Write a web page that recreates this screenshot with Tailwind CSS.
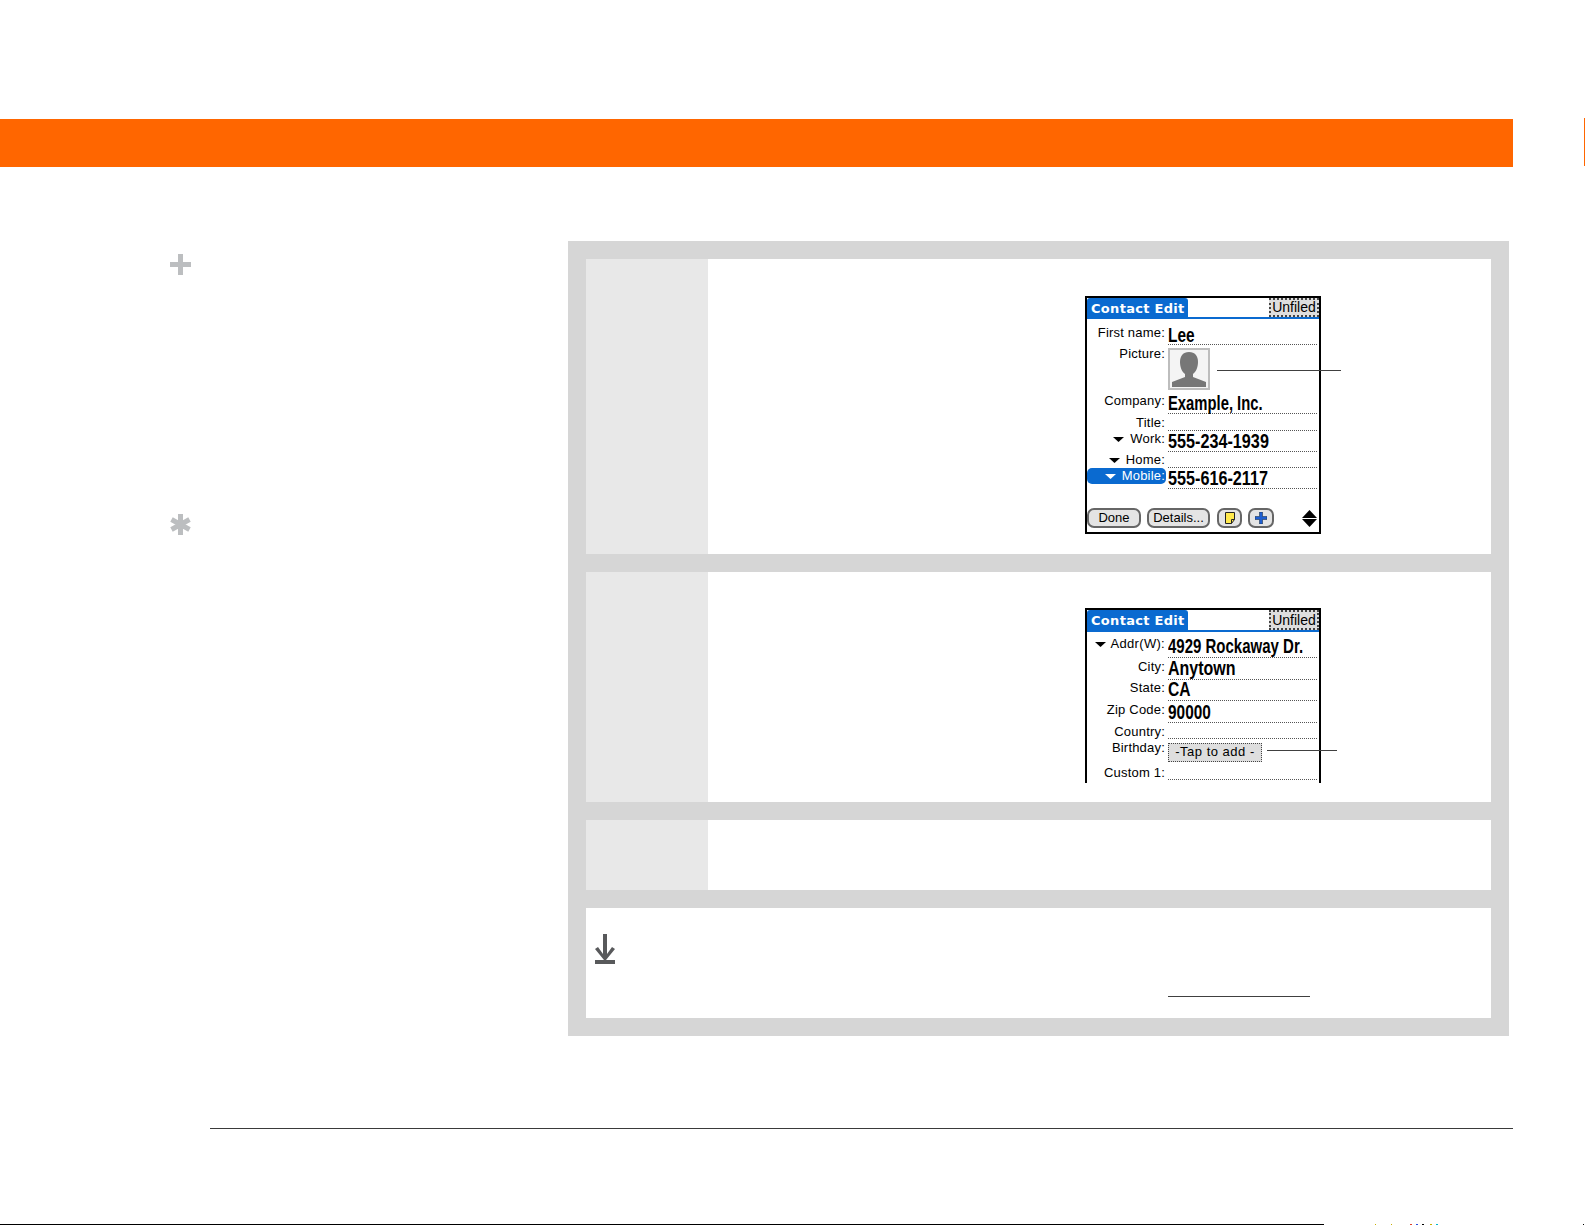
<!DOCTYPE html>
<html lang="en">
<head>
    <meta charset="UTF-8">
    <title>Contact Edit</title>
    <script src="https://cdn.jsdelivr.net/npm/@tailwindcss/browser@4"></script>
</head>
<body class="bg-white font-['Liberation_Sans',sans-serif] text-black">
<div class="relative w-[1585px] h-[1225px] overflow-hidden pt-[119px]">
    <!-- Orange header -->
    <div class="w-[1513px] h-[48px] bg-[#ff6600]"></div>
    <div class="absolute right-0 top-[118px] w-px h-[48px] bg-[#ff6600]"></div>

    <div class="flex mt-[74px]">
        <!-- Sidebar icons -->
        <div class="w-[568px] pl-[170px] flex flex-col">
            <svg class="mt-[13px]" width="21" height="21" viewBox="0 0 21 21"><path d="M8 0h5v8h8v5h-8v8H8v-8H0V8h8z" fill="#bcbec0"/></svg>
            <svg class="mt-[239px]" width="21" height="21" viewBox="0 0 21 21"><path d="M10.500 0v21M1.500 5.500l18 10M1.500 15.500l18-10" fill="none" stroke="#bcbec0" stroke-width="5"/></svg>
        </div>

        <!-- Step table -->
        <div class="w-[941px] h-[795px] bg-[#d6d6d6] p-[18px] flex flex-col gap-[18px]">
            <!-- Step 1 -->
            <div class="h-[295px] bg-white flex">
                <div class="w-[122px] bg-[#e8e8e8]"></div>
                <div class="pl-[377px] pt-[37px]">
                    <div class="relative w-[236px] h-[238px] border-2 border-black bg-white">
                        <div class="flex justify-between h-[21px] border-b-2 border-[#0a6ad0]">
                            <div class="w-[101px] bg-[#0a6ad0] rounded-t-[3px] pl-[4px] text-white font-['DejaVu_Sans',sans-serif] font-bold text-[13px] tracking-[0.3px] leading-[21px]">Contact Edit</div>
                            <div class="w-[50px] border-2 border-dotted border-[#444] bg-[#dedede] text-[14px] leading-[15px] text-center">Unfiled</div>
                        </div>
                        <div class="flex items-end h-[26px]"><div class="w-[79px] pr-px pb-[5px] text-right text-[13px] tracking-[0.2px] leading-[14px]">First name:</div><div class="ml-[2px] w-[149px] h-full border-b border-dotted border-[#555] font-bold text-[20px] leading-[32px]"><span class="inline-block origin-left scale-x-[.77] whitespace-nowrap">Lee</span></div></div>
                        <div class="flex h-[46px]"><div class="w-[79px] pr-px pt-[2px] text-right text-[13px] tracking-[0.2px] leading-[14px]">Picture:</div>
                            <div class="ml-[2px] mt-[3px] w-[42px] h-[42px] border-2 border-[#bdbdbd] bg-[#f4f4f4] p-px">
                                <svg width="36" height="36" viewBox="0 0 36 36"><path d="M18 1c6 0 9 4 9 10 0 5-2 10-5 12v3l13 5v5H1v-5l13-5v-3c-3-2-5-7-5-12C9 5 12 1 18 1z" fill="#777"/></svg>
                            </div>
                        </div>
                        <div class="flex items-end h-[23px]"><div class="w-[79px] pr-px pb-[6px] text-right text-[13px] tracking-[0.2px] leading-[14px]">Company:</div><div class="ml-[2px] w-[149px] h-full border-b border-dotted border-[#555] font-bold text-[20px] leading-[25px]"><span class="inline-block origin-left scale-x-[.74] whitespace-nowrap">Example, Inc.</span></div></div>
                        <div class="flex items-end h-[17px]"><div class="w-[79px] pr-px pb-[1px] text-right text-[13px] tracking-[0.2px] leading-[14px]">Title:</div><div class="ml-[2px] w-[149px] h-full border-b border-dotted border-[#555]"></div></div>
                        <div class="flex items-end h-[21px]"><div class="w-[79px] pr-px pb-[6px] flex justify-end items-center gap-[6px] text-[13px] tracking-[0.2px] leading-[14px]"><svg width="11" height="5" viewBox="0 0 11 5"><path d="M0 0h11L5.500 5z"/></svg><span>Work:</span></div><div class="ml-[2px] w-[149px] h-full border-b border-dotted border-[#555] font-bold text-[20px] leading-[21px]"><span class="inline-block origin-left scale-x-[.81] whitespace-nowrap">555-234-1939</span></div></div>
                        <div class="flex items-end h-[16px]"><div class="w-[79px] pr-px pb-[1px] flex justify-end items-center gap-[6px] text-[13px] tracking-[0.2px] leading-[14px]"><svg width="11" height="5" viewBox="0 0 11 5"><path d="M0 0h11L5.500 5z"/></svg><span>Home:</span></div><div class="ml-[2px] w-[149px] h-full border-b border-dotted border-[#555]"></div></div>
                        <div class="flex items-end h-[21px]"><div class="w-[79px] h-[16px] mb-[5px] pr-px rounded-[5px] bg-[#0a6ad0] text-white flex justify-end items-center gap-[6px] text-[13px] tracking-[0.2px] leading-[14px]"><svg width="11" height="5" viewBox="0 0 11 5"><path d="M0 0h11L5.500 5z" fill="#fff"/></svg><span>Mobile:</span></div><div class="ml-[2px] w-[149px] h-full border-b border-dotted border-[#555] font-bold text-[20px] leading-[21px]"><span class="inline-block origin-left scale-x-[.81] whitespace-nowrap">555-616-2117</span></div></div>
                        <!-- Command bar -->
                        <div class="flex items-center mt-[19px] h-[20px]">
                            <div class="w-[54px] h-[20px] rounded-[7px] border-2 border-[#666] bg-[#e4e4e4] text-[13px] leading-[16px] text-center">Done</div>
                            <div class="ml-[6px] w-[63px] h-[20px] rounded-[7px] border-2 border-[#666] bg-[#e4e4e4] text-[13px] leading-[16px] text-center">Details...</div>
                            <div class="ml-[7px] w-[25px] h-[20px] rounded-[7px] border-2 border-[#666] bg-[#e4e4e4] flex items-center justify-center"><svg width="10" height="12" viewBox="0 0 10 12"><path d="M.5.500h9v7l-3 4h-6z" fill="#ffe94d" stroke="#222"/><path d="M6.500 11.500v-4h3" fill="none" stroke="#222"/></svg></div>
                            <div class="ml-[6px] w-[26px] h-[20px] rounded-[7px] border-2 border-[#666] bg-[#e4e4e4] flex items-center justify-center"><svg width="12" height="12" viewBox="0 0 12 12"><path d="M4.500 0h3v4.500H12v3H7.500V12h-3V7.500H0v-3h4.500z" fill="#1f5fd0" stroke="#123" stroke-width=".5"/></svg></div>
                            <div class="ml-[28px] flex flex-col gap-[1px]">
                                <svg width="15" height="8" viewBox="0 0 15 8"><path d="M7.500 0L15 8H0z"/></svg>
                                <svg width="15" height="8" viewBox="0 0 15 8"><path d="M0 0h15L7.500 8z"/></svg>
                            </div>
                        </div>
                        <div class="absolute left-[130px] top-[72px] w-[124px] h-px bg-[#404040]"></div>
                    </div>
                </div>
            </div>

            <!-- Step 2 -->
            <div class="h-[230px] bg-white flex">
                <div class="w-[122px] bg-[#e8e8e8]"></div>
                <div class="pl-[377px] pt-[36px]">
                    <div class="relative w-[236px] h-[175px] border-2 border-b-0 border-black bg-white">
                        <div class="flex justify-between h-[22px] border-b-2 border-[#0a6ad0]">
                            <div class="w-[101px] bg-[#0a6ad0] rounded-t-[3px] pl-[4px] text-white font-['DejaVu_Sans',sans-serif] font-bold text-[13px] tracking-[0.3px] leading-[22px]">Contact Edit</div>
                            <div class="w-[50px] border-2 border-dotted border-[#444] bg-[#dedede] text-[14px] leading-[16px] text-center">Unfiled</div>
                        </div>
                        <div class="flex items-end h-[26px]"><div class="w-[79px] pr-px pb-[7px] flex justify-end items-center gap-[5px] text-[13px] tracking-[0.3px] leading-[14px]"><svg width="11" height="5" viewBox="0 0 11 5"><path d="M0 0h11L5.500 5z"/></svg><span>Addr(W):</span></div><div class="ml-[2px] w-[149px] h-full border-b border-dotted border-[#555] font-bold text-[20px] leading-[28px]"><span class="inline-block origin-left scale-x-[.75] whitespace-nowrap">4929 Rockaway Dr.</span></div></div>
                        <div class="flex items-end h-[22px]"><div class="w-[79px] pr-px pb-[6px] text-right text-[13px] tracking-[0.2px] leading-[14px]">City:</div><div class="ml-[2px] w-[149px] h-full border-b border-dotted border-[#555] font-bold text-[20px] leading-[20px]"><span class="inline-block origin-left scale-x-[.8] whitespace-nowrap">Anytown</span></div></div>
                        <div class="flex items-end h-[21px]"><div class="w-[79px] pr-px pb-[6px] text-right text-[13px] tracking-[0.2px] leading-[14px]">State:</div><div class="ml-[2px] w-[149px] h-full border-b border-dotted border-[#555] font-bold text-[20px] leading-[18px]"><span class="inline-block origin-left scale-x-[.78] whitespace-nowrap">CA</span></div></div>
                        <div class="flex items-end h-[22px]"><div class="w-[79px] pr-px pb-[6px] text-right text-[13px] tracking-[0.2px] leading-[14px]">Zip Code:</div><div class="ml-[2px] w-[149px] h-full border-b border-dotted border-[#555] font-bold text-[20px] leading-[22px]"><span class="inline-block origin-left scale-x-[.77] whitespace-nowrap">90000</span></div></div>
                        <div class="flex items-end h-[16px]"><div class="w-[79px] pr-px text-right text-[13px] tracking-[0.2px] leading-[14px]">Country:</div><div class="ml-[2px] w-[149px] h-full border-b border-dotted border-[#555]"></div></div>
                        <div class="flex h-[23px]"><div class="w-[79px] pr-px pt-[2px] text-right text-[13px] tracking-[0.2px] leading-[14px]">Birthday:</div><div class="ml-[2px] mt-[4px] w-[94px] h-[19px] border border-dotted border-[#444] bg-[#dedede] text-[13px] leading-[16px] text-center tracking-[0.5px]">-Tap to add -</div></div>
                        <div class="flex items-end h-[18px]"><div class="w-[79px] pr-px text-right text-[13px] tracking-[0.2px] leading-[14px]">Custom 1:</div><div class="ml-[2px] w-[149px] h-full border-b border-dotted border-[#555]"></div></div>
                        <div class="absolute left-[180px] top-[140px] w-[70px] h-px bg-[#404040]"></div>
                    </div>
                </div>
            </div>

            <!-- Step 3 -->
            <div class="h-[70px] bg-white flex">
                <div class="w-[122px] bg-[#e8e8e8]"></div>
            </div>

            <!-- Tip -->
            <div class="h-[110px] bg-white flex items-start">
                <svg class="ml-[9px] mt-[26px]" width="20" height="30" viewBox="0 0 20 30"><path d="M8 0h4v20l5-7 3 2-9 11h-2L0 15l3-2 5 7zM0 26h20v4H0z" fill="#58595b"/></svg>
                <div class="ml-[553px] mt-[88px] w-[142px] h-px bg-[#404040]"></div>
            </div>
        </div>
    </div>

    <!-- Footer rule -->
    <div class="ml-[210px] mt-[92px] w-[1303px] h-px bg-[#3a3a3a]"></div>
    <div class="flex mt-[95px] h-px">
        <div class="w-[1324px] bg-black"></div>
        <div class="ml-[51px] w-px bg-[#c9b000]"></div>
        <div class="ml-[15px] w-px bg-[#c9b000]"></div>
        <div class="ml-[18px] w-[2px] bg-[#e0402a]"></div>
        <div class="ml-[4px] w-[2px] bg-[#2a50e0]"></div>
        <div class="ml-[4px] w-[2px] bg-black"></div>
        <div class="ml-[6px] w-[2px] bg-[#c9b000]"></div>
        <div class="ml-[4px] w-[2px] bg-[#00b8d0]"></div>
        <div class="ml-[145px] w-px bg-black"></div>
    </div>
</div>
</body>
</html>
